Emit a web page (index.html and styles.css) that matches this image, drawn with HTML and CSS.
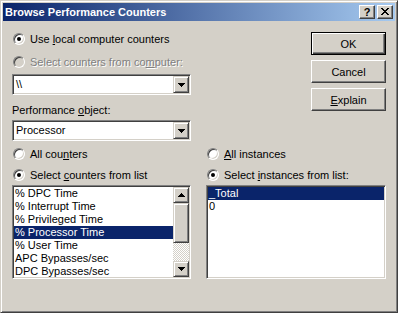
FILE: index.html
```html
<!DOCTYPE html>
<html lang="en">
<head>
  <meta charset="UTF-8">
  <title>Browse Performance Counters</title>
  <link rel="stylesheet" href="styles.css">
</head>
<body>
  <div class="window">
    <div class="titlebar">
      <span class="title">Browse Performance Counters</span>
      <div class="caption-btn help">?</div>
      <div class="caption-btn close">
        <svg width="8" height="7" viewBox="0 0 8 7" shape-rendering="crispEdges"><path d="M0 0h2v1h-2zM6 0h2v1h-2zM1 1h2v1h-2zM5 1h2v1h-2zM2 2h4v1h-4zM3 3h2v1h-2zM2 4h4v1h-4zM1 5h2v1h-2zM5 5h2v1h-2zM0 6h2v1h-2zM6 6h2v1h-2z"/></svg>
      </div>
    </div>

    <div class="content">
      <div class="top">
        <div class="top-left">
          <div class="radio"><span class="dot checked"></span><span>Use <u>l</u>ocal computer counters</span></div>
          <div class="radio disabled second"><span class="dot"></span><span>Select counters from co<u>m</u>puter:</span></div>
          <div class="combo first-combo">
            <span class="value">\\</span>
            <span class="drop"><svg width="7" height="4" viewBox="0 0 7 4" shape-rendering="crispEdges"><path d="M0 0h7v1h-7zM1 1h5v1h-5zM2 2h3v1h-3zM3 3h1v1h-1z"/></svg></span>
          </div>
          <div class="label">Performance <u>o</u>bject:</div>
          <div class="combo">
            <span class="value">Processor</span>
            <span class="drop"><svg width="7" height="4" viewBox="0 0 7 4" shape-rendering="crispEdges"><path d="M0 0h7v1h-7zM1 1h5v1h-5zM2 2h3v1h-3zM3 3h1v1h-1z"/></svg></span>
          </div>
        </div>
        <div class="buttons">
          <button class="btn default">OK</button>
          <button class="btn">Cancel</button>
          <button class="btn"><span><u>E</u>xplain</span></button>
        </div>
      </div>

      <div class="bottom">
        <div class="col">
          <div class="radio"><span class="dot"></span><span>All cou<u>n</u>ters</span></div>
          <div class="radio second"><span class="dot checked"></span><span>Select <u>c</u>ounters from list</span></div>
          <div class="listbox">
            <div class="items">
              <div class="item">% DPC Time</div>
              <div class="item">% Interrupt Time</div>
              <div class="item">% Privileged Time</div>
              <div class="item sel">% Processor Time</div>
              <div class="item">% User Time</div>
              <div class="item">APC Bypasses/sec</div>
              <div class="item">DPC Bypasses/sec</div>
            </div>
            <div class="scrollbar">
              <span class="sb-btn"><svg width="7" height="4" viewBox="0 0 7 4" shape-rendering="crispEdges"><path d="M3 0h1v1h-1zM2 1h3v1h-3zM1 2h5v1h-5zM0 3h7v1h-7z"/></svg></span>
              <span class="sb-thumb"></span>
              <span class="sb-track"></span>
              <span class="sb-btn"><svg width="7" height="4" viewBox="0 0 7 4" shape-rendering="crispEdges"><path d="M0 0h7v1h-7zM1 1h5v1h-5zM2 2h3v1h-3zM3 3h1v1h-1z"/></svg></span>
            </div>
          </div>
        </div>
        <div class="col">
          <div class="radio"><span class="dot"></span><span><u>A</u>ll instances</span></div>
          <div class="radio second"><span class="dot checked"></span><span>Select <u>i</u>nstances from list:</span></div>
          <div class="listbox">
            <div class="items">
              <div class="item sel">_Total</div>
              <div class="item">0</div>
            </div>
          </div>
        </div>
      </div>
    </div>
  </div>
</body>
</html>
```

FILE: styles.css
```css
* {
  box-sizing: border-box;
}

html, body {
  margin: 0;
  padding: 0;
  background-color: #d4d0c8;
}

body {
  font-family: "Liberation Sans", Arial, sans-serif;
  font-size: 11px;
  color: #000;
}

u {
  text-decoration: underline;
  text-underline-offset: 1px;
}

.window {
  width: 398px;
  height: 313px;
  background-color: #d4d0c8;
  border: 1px solid;
  border-color: #d4d0c8 #404040 #404040 #d4d0c8;
  box-shadow: inset 1px 1px #fff, inset -1px -1px #808080;
  padding: 2px;
  display: flex;
  flex-direction: column;
}

/* title bar */
.titlebar {
  height: 18px;
  background: linear-gradient(to right, #0a246a, #a6caf0);
  display: flex;
  align-items: center;
  padding: 0 2px 0 2px;
}

.title {
  flex-grow: 1;
  color: #fff;
  font-weight: bold;
  white-space: nowrap;
}

.caption-btn {
  width: 16px;
  height: 14px;
  background-color: #d4d0c8;
  border: 1px solid;
  border-color: #fff #404040 #404040 #fff;
  box-shadow: inset -1px -1px #808080;
  display: flex;
  align-items: center;
  justify-content: center;
  font-weight: bold;
  font-size: 11px;
  line-height: 12px;
}

.caption-btn.help {
  margin-right: 2px;
}

.caption-btn.close {
  padding: 0 1px 1px 0;
}

/* body */
.content {
  flex-grow: 1;
  padding: 11px 9px 0 9px;
}

.top {
  display: flex;
  justify-content: space-between;
  align-items: flex-start;
}

.top-left {
  width: 179px;
}

.buttons {
  display: flex;
  flex-direction: column;
  gap: 5px;
}

.btn {
  width: 75px;
  height: 23px;
  margin: 0;
  padding: 0;
  font-family: inherit;
  font-size: 11px;
  color: #000;
  background-color: #d4d0c8;
  border: 1px solid;
  border-color: #fff #404040 #404040 #fff;
  box-shadow: inset -1px -1px #808080;
  display: flex;
  align-items: center;
  justify-content: center;
}

.btn.default {
  border: 1px solid #000;
  box-shadow: inset 1px 1px #fff, inset -1px -1px #404040, inset -2px -2px #808080;
}

.radio {
  height: 14px;
  line-height: 14px;
  display: flex;
  align-items: center;
  white-space: nowrap;
}

.radio.second {
  margin-top: 7px;
}

.top-left .radio.second {
  margin-top: 9px;
}

.dot {
  width: 12px;
  height: 12px;
  margin: 0 5px 0 1px;
  border-radius: 50%;
  background-color: #fff;
  border: 1px solid;
  border-color: #808080 #fff #fff #808080;
  box-shadow: inset 1px 1px #404040, inset -1px -1px #d4d0c8;
  display: flex;
  align-items: center;
  justify-content: center;
  flex-shrink: 0;
}

.dot.checked::after {
  content: "";
  width: 4px;
  height: 4px;
  border-radius: 50%;
  background-color: #000;
}

.radio.disabled {
  color: #808080;
  text-shadow: 1px 1px #fff;
}

.radio.disabled .dot {
  background-color: #d4d0c8;
}

.combo {
  height: 21px;
  background-color: #fff;
  border: 1px solid;
  border-color: #808080 #fff #fff #808080;
  box-shadow: inset 1px 1px #404040, inset -1px -1px #d4d0c8;
  padding: 1px;
  display: flex;
}

.first-combo {
  margin-top: 5px;
}

.combo .value {
  flex-grow: 1;
  line-height: 17px;
  padding-left: 2px;
}

.drop,
.sb-btn {
  width: 16px;
  height: 17px;
  background-color: #d4d0c8;
  border: 1px solid;
  border-color: #d4d0c8 #404040 #404040 #d4d0c8;
  box-shadow: inset 1px 1px #fff, inset -1px -1px #808080;
  display: flex;
  align-items: center;
  justify-content: center;
}

.label {
  margin-top: 9px;
  height: 13px;
  line-height: 13px;
  margin-bottom: 3px;
}

.bottom {
  display: grid;
  grid-template-columns: 179px 180px;
  column-gap: 15px;
  margin-top: 6px;
}

.listbox {
  margin-top: 3px;
  height: 94px;
  background-color: #fff;
  border: 1px solid;
  border-color: #808080 #fff #fff #808080;
  box-shadow: inset 1px 1px #404040, inset -1px -1px #d4d0c8;
  padding: 1px;
  display: flex;
  overflow: hidden;
}

.items {
  flex-grow: 1;
  overflow: hidden;
}

.item {
  height: 13px;
  line-height: 13px;
  padding-left: 1px;
  white-space: nowrap;
}

.item.sel {
  background-color: #0a246a;
  color: #fff;
}

.scrollbar {
  width: 16px;
  display: flex;
  flex-direction: column;
}

.sb-btn {
  height: 16px;
}

.sb-thumb {
  height: 40px;
  background-color: #d4d0c8;
  border: 1px solid;
  border-color: #d4d0c8 #404040 #404040 #d4d0c8;
  box-shadow: inset 1px 1px #fff, inset -1px -1px #808080;
}

.sb-track {
  flex-grow: 1;
  background: repeating-conic-gradient(#fff 0 25%, #d4d0c8 0 50%) 0 0 / 2px 2px;
}
```
